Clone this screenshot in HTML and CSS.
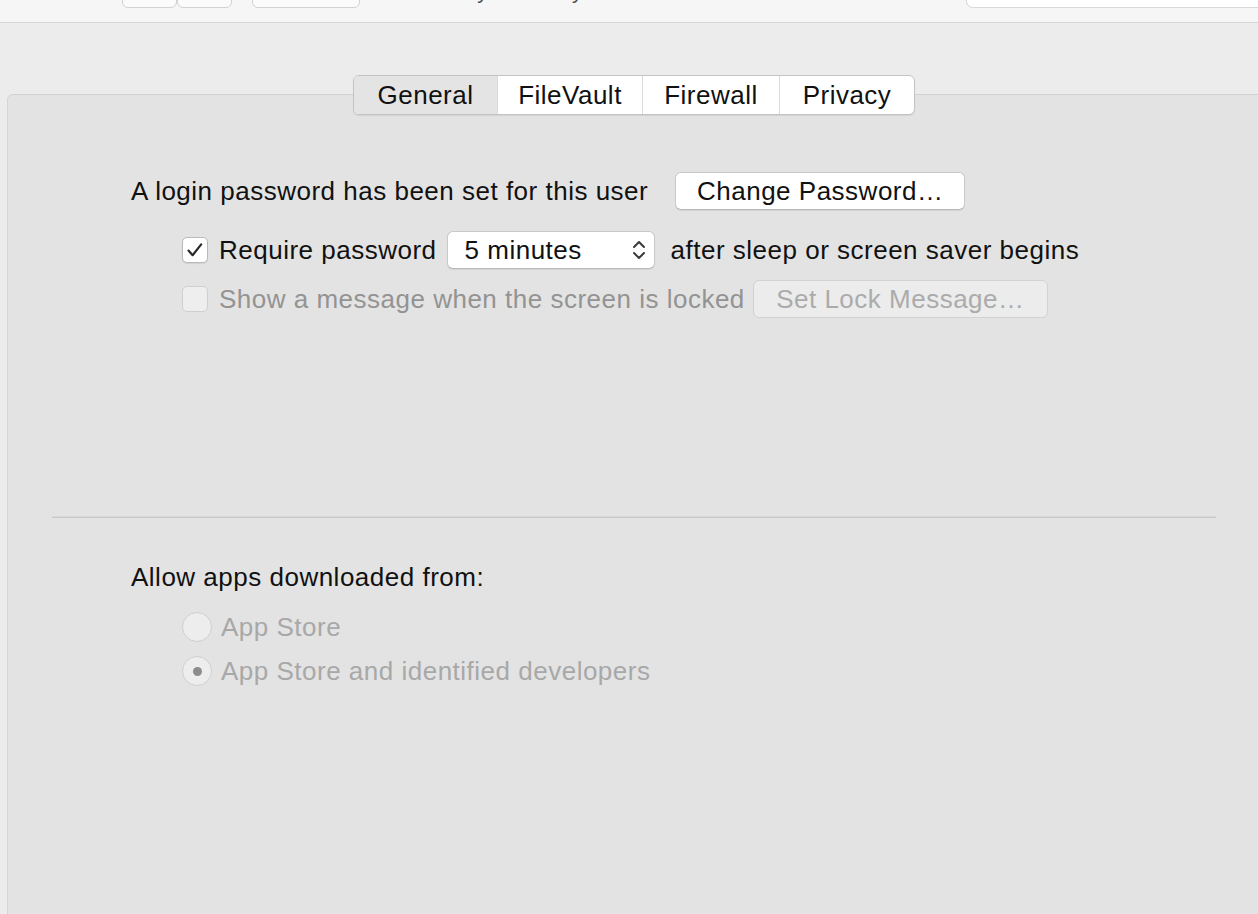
FILE: index.html
```html
<!DOCTYPE html>
<html lang="en">

<head>
    <meta charset="UTF-8">
    <meta name="viewport" content="width=device-width, initial-scale=1.0">
    <title>Security &amp; Privacy</title>
    <link rel="stylesheet" href="styles.css">
</head>

<body>
    <!-- window toolbar, mostly scrolled off the top -->
    <div class="toolbar">
        <div class="nav-seg">
            <span></span>
            <span></span>
        </div>
        <div class="tool-btn"></div>
        <div class="win-title">Security &amp; Privacy</div>
        <div class="search"></div>
    </div>

    <div class="window">
        <div class="tabs">
            <div class="tab active">General</div>
            <div class="tab">FileVault</div>
            <div class="tab">Firewall</div>
            <div class="tab">Privacy</div>
        </div>

        <div class="panel">
            <div class="row row-login">
                <span class="text">A login password has been set for this user</span>
                <button type="button" class="btn btn-change">Change Password…</button>
            </div>

            <div class="row row-require indent">
                <span class="check on">
                    <svg width="18" height="16" viewBox="0 0 18 16">
                        <path d="M2.5 8.6 L6.6 13.2 L15.2 2.4" fill="none" stroke="#2a2a2a" stroke-width="2.2" stroke-linecap="round" stroke-linejoin="round" />
                    </svg>
                </span>
                <span class="text">Require password</span>
                <div class="popup">
                    <span>5 minutes</span>
                    <svg width="16" height="26" viewBox="0 0 16 26">
                        <path d="M3 10 L8 5 L13 10" fill="none" stroke="#3a3a3a" stroke-width="2" stroke-linecap="round" stroke-linejoin="round" />
                        <path d="M3 16 L8 21 L13 16" fill="none" stroke="#3a3a3a" stroke-width="2" stroke-linecap="round" stroke-linejoin="round" />
                    </svg>
                </div>
                <span class="text">after sleep or screen saver begins</span>
            </div>

            <div class="row row-lock indent disabled">
                <span class="check"></span>
                <span class="text">Show a message when the screen is locked</span>
                <button type="button" class="btn btn-lock" disabled>Set Lock Message…</button>
            </div>

            <div class="sep"></div>

            <div class="allow-title">Allow apps downloaded from:</div>
            <div class="radio-row indent">
                <span class="radio"></span>
                <span class="text">App Store</span>
            </div>
            <div class="radio-row indent">
                <span class="radio on"><i></i></span>
                <span class="text">App Store and identified developers</span>
            </div>
        </div>
    </div>
</body>

</html>
```

FILE: styles.css
```css
* {
    padding: 0;
    margin: 0;
    box-sizing: border-box;
}

html,
body {
    width: 100%;
    height: 100%;
    overflow: hidden;
}

body {
    background: #ececec;
    font-family: "Liberation Sans", Arial, sans-serif;
    font-size: 26px;
    letter-spacing: 0.5px;
    color: #111111;
}

/* toolbar */

.toolbar {
    height: 23px;
    background: #f6f6f6;
    border-bottom: 1px solid #d6d6d6;
    display: flex;
    align-items: flex-end;
    padding: 0 0 14px 122px;
    overflow: hidden;
}

.nav-seg {
    display: flex;
    height: 40px;
}

.nav-seg span {
    width: 55px;
    height: 40px;
    border: 1px solid #d2d2d2;
    border-radius: 0 0 6px 6px;
    background: #fbfbfb;
}

.tool-btn {
    width: 108px;
    height: 40px;
    margin-left: 20px;
    border: 1px solid #d2d2d2;
    border-radius: 0 0 6px 6px;
    background: #fbfbfb;
}

.win-title {
    margin: 0 0 6px 52px;
    line-height: 21px;
    font-size: 21px;
    letter-spacing: 0;
    color: #4a4a4a;
    white-space: nowrap;
}

.search {
    margin-left: auto;
    width: 292px;
    height: 40px;
    border: 1px solid #d9d9d9;
    border-right: none;
    border-radius: 0 0 0 7px;
    background: #ffffff;
}

/* tab view */

.window {
    height: calc(100% - 23px);
    display: flex;
    flex-direction: column;
}

.tabs {
    display: flex;
    align-self: flex-start;
    margin: 52px 0 0 353px;
    height: 40px;
    background: #ffffff;
    border: 1px solid #c4c4c4;
    border-radius: 6px;
    box-shadow: 0 1px 1px rgba(0, 0, 0, 0.08);
    position: relative;
    z-index: 1;
    overflow: hidden;
}

.tab {
    line-height: 38px;
    text-align: center;
    color: #111111;
    border-left: 1px solid #dadada;
}

.tab:nth-child(1) {
    width: 143px;
    border-left: none;
}

.tab:nth-child(2) {
    width: 145px;
}

.tab:nth-child(3) {
    width: 137px;
}

.tab:nth-child(4) {
    width: 135px;
}

.tab.active {
    background: #e4e4e4;
}

.panel {
    flex: 1;
    margin: -21px 0 0 7px;
    background: #e3e3e3;
    border-top: 1px solid #d2d2d2;
    border-left: 1px solid #d6d6d6;
    border-radius: 6px 0 0 0;
    padding: 77px 0 0 123px;
}

.row {
    display: flex;
    align-items: center;
    height: 38px;
    white-space: nowrap;
}

.row-require {
    margin-top: 21px;
}

.row-lock {
    margin-top: 11px;
}

.indent {
    margin-left: 51px;
}

.disabled .text {
    color: #939393;
}

/* controls */

.btn {
    height: 38px;
    font-family: inherit;
    font-size: 26px;
    letter-spacing: 0.5px;
    color: #111111;
    background: #ffffff;
    border: 1px solid #c9c9c9;
    border-bottom-color: #b9b9b9;
    border-radius: 6px;
    box-shadow: 0 1px 1px rgba(0, 0, 0, 0.07);
    flex: none;
}

.btn-change {
    width: 290px;
    margin-left: 27px;
}

.btn-lock {
    width: 295px;
    margin-left: 8px;
    background: #ececec;
    color: #ababab;
    border-color: #d2d2d2;
    box-shadow: none;
}

.check {
    flex: none;
    width: 26px;
    height: 26px;
    margin-right: 11px;
    border: 1px solid #cfcfcf;
    border-radius: 5px;
    background: #eeeeee;
    display: flex;
    align-items: center;
    justify-content: center;
}

.check.on {
    background: #ffffff;
    border-color: #b9b9b9;
    box-shadow: 0 1px 1px rgba(0, 0, 0, 0.08);
}

.popup {
    flex: none;
    width: 208px;
    height: 38px;
    margin: 0 16px 0 10px;
    background: #ffffff;
    border: 1px solid #c9c9c9;
    border-bottom-color: #b9b9b9;
    border-radius: 6px;
    box-shadow: 0 1px 1px rgba(0, 0, 0, 0.07);
    display: flex;
    align-items: center;
    justify-content: space-between;
    padding: 0 7px 0 17px;
}

.sep {
    margin: 198px 42px 0 -79px;
    height: 2px;
    border-top: 1px solid #d9d9d9;
    border-bottom: 1px solid #c8c8c8;
}

.allow-title {
    margin-top: 44px;
    line-height: 30px;
}

.radio-row {
    display: flex;
    align-items: center;
    height: 30px;
    margin-top: 20px;
}

.radio-row + .radio-row {
    margin-top: 14px;
}

.radio-row .text {
    color: #a8a8a8;
}

.radio {
    flex: none;
    width: 30px;
    height: 30px;
    margin-right: 9px;
    border: 1px solid #cfcfcf;
    border-radius: 50%;
    background: #ededed;
    display: flex;
    align-items: center;
    justify-content: center;
}

.radio i {
    width: 9px;
    height: 9px;
    border-radius: 50%;
    background: #8c8c8c;
}
```
